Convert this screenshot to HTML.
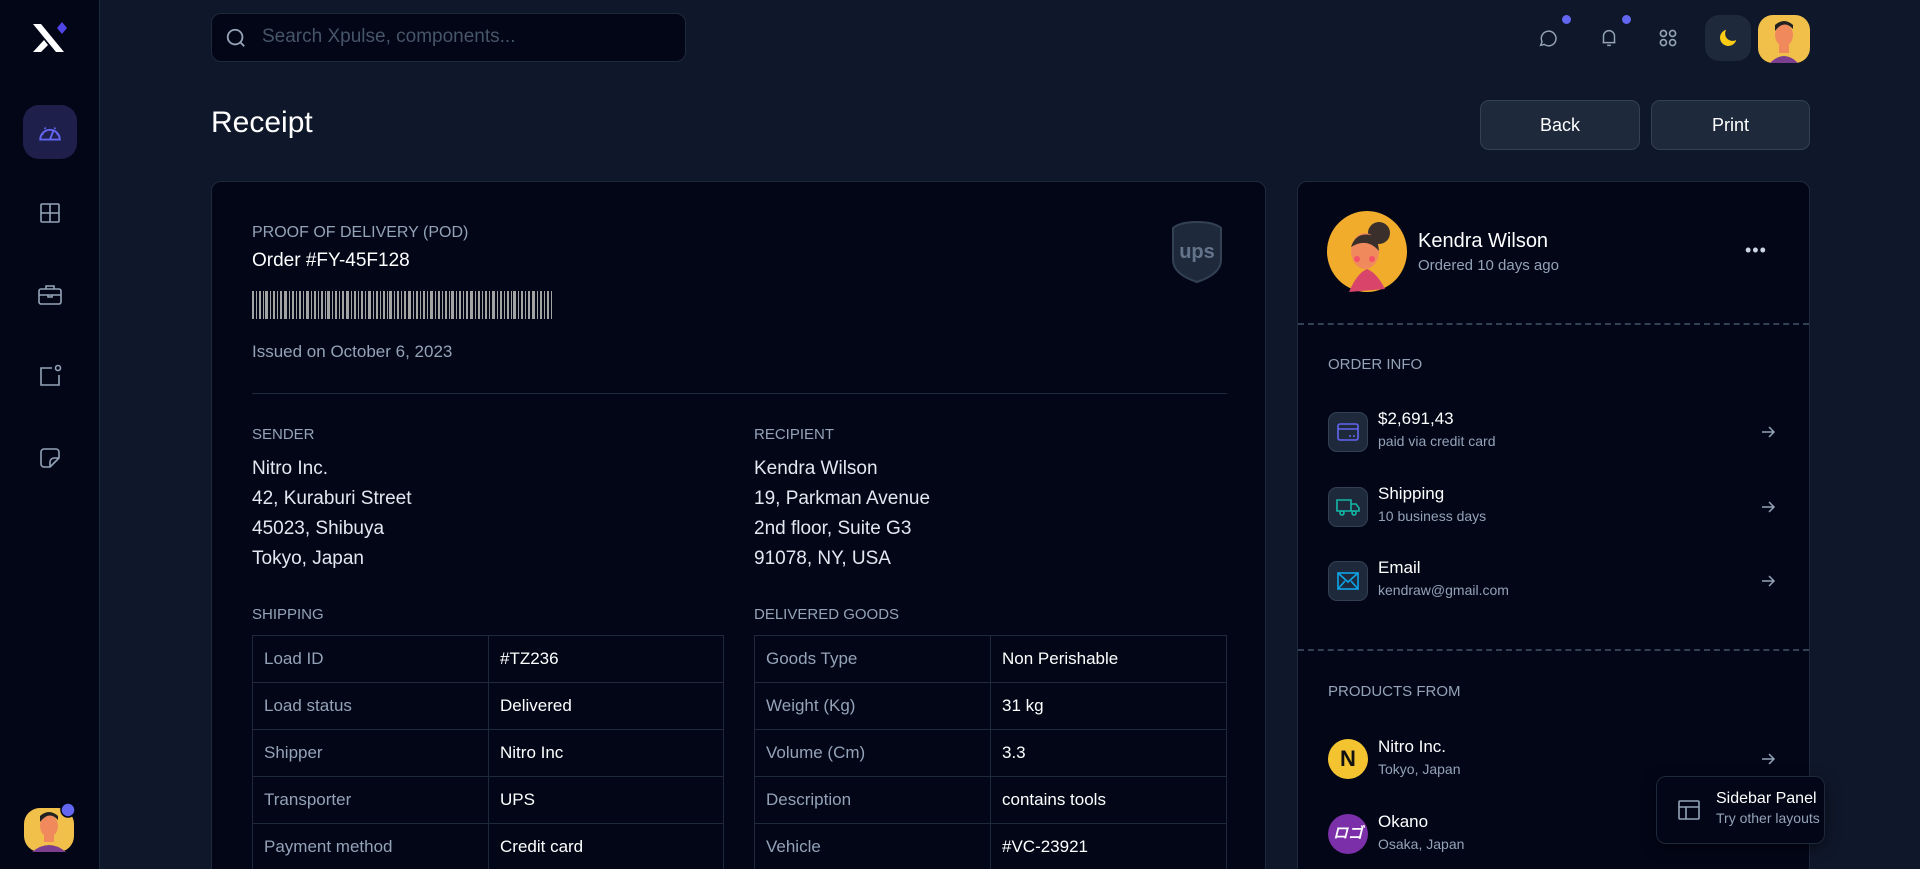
<!DOCTYPE html>
<html><head><meta charset="utf-8"><style>
*{box-sizing:border-box;margin:0;padding:0}
html,body{width:1920px;height:869px;overflow:hidden}
body{background:#0f172a;font-family:"Liberation Sans",sans-serif;color:#f1f5f9}
#w{position:relative;width:1920px;height:869px;overflow:hidden;background:#0f172a}
.abs{position:absolute}
.side{left:0;top:0;width:100px;height:869px;background:#020617;border-right:1px solid #1e293b}
.card{background:#020617;border:1px solid #1e293b;border-radius:10px}
.lbl{color:#94a3b8;font-size:15px;text-transform:uppercase}
.btn{background:#1e293b;border:1px solid #334155;border-radius:9px;font-size:18px;display:flex;align-items:center;justify-content:center;color:#fff}
table{border-collapse:collapse;position:absolute}
td{border:1px solid #1e293b;height:47px;font-size:17px;padding-left:11px}
td.k{color:#94a3b8;width:236px}
td.v{color:#fff}
.addr{font-size:19px;line-height:30px;color:#e2e8f0}
.ib{width:40px;height:40px;border-radius:9px;background:#1e293b;border:1px solid #334155;display:flex;align-items:center;justify-content:center}
.t1{font-size:17px;color:#fff}
.t2{font-size:14px;color:#94a3b8;margin-top:4px}
</style></head><body><div id="w">
<div class="abs side">
 <svg class="abs" style="left:30px;top:20px" width="42" height="38" viewBox="0 0 42 38"><path d="M3 4 L11 4 L34 32 L26 32 Z M3 32 L14 20 L18 25 L11 32 Z" fill="#fff"/><path d="M32 2 L37 8 L32 14 L27 8Z" fill="#4f46e5"/></svg>
 <div class="abs" style="left:23px;top:105px;width:54px;height:54px;border-radius:16px;background:#1e1f4a"></div>
 <svg class="abs" style="left:37px;top:119px" width="26" height="26" viewBox="0 0 24 24" fill="none" stroke="#6366f1" stroke-width="1.8"><path d="M3 19 A9 9 0 1 1 21 19 Z M12 19 L15 11 M4 14h2M18 14h2M7 8l1 1M17 8l-1 1"/></svg>
 <svg class="abs" style="left:38px;top:201px" width="24" height="24" viewBox="0 0 24 24" fill="none" stroke="#94a3b8" stroke-width="1.6"><rect x="3" y="3" width="18" height="18" rx="1"/><path d="M12 3v18M3 12h18"/></svg>
 <svg class="abs" style="left:37px;top:283px" width="26" height="24" viewBox="0 0 26 24" fill="none" stroke="#94a3b8" stroke-width="1.6"><rect x="2" y="6" width="22" height="15" rx="2"/><path d="M9 6V3h8v3M2 12h22M11 12v2h4v-2"/></svg>
 <svg class="abs" style="left:38px;top:364px" width="24" height="24" viewBox="0 0 24 24" fill="none" stroke="#94a3b8" stroke-width="1.6"><path d="M14 4H3v17h18V11"/><circle cx="20" cy="4" r="2.5"/></svg>
 <svg class="abs" style="left:38px;top:446px" width="24" height="24" viewBox="0 0 24 24" fill="none" stroke="#94a3b8" stroke-width="1.6"><path d="M21 12V6a3 3 0 0 0-3-3H6a3 3 0 0 0-3 3v12a3 3 0 0 0 3 3h6Z M21 12l-9 9 M12 21v-5a4 4 0 0 1 4-4h5"/></svg>
 <svg class="abs" style="left:24px;top:802px" width="52" height="52" viewBox="0 0 52 52"><rect width="50" height="44" y="6" rx="16" fill="#f0c04a"/><path d="M8 50 Q25 36 42 50Z" fill="#7c3f8f"/><rect x="20" y="28" width="10" height="12" fill="#f08a5d"/><ellipse cx="25" cy="24" rx="9" ry="11" fill="#f08a5d"/><path d="M16 20 Q25 8 34 18 L34 14 Q25 6 16 14Z" fill="#222"/><circle cx="44" cy="8" r="7" fill="#6366f1" stroke="#020617" stroke-width="1.5"/></svg>
</div>

<div class="abs" style="left:211px;top:13px;width:475px;height:49px;background:#020617;border:1px solid #1e293b;border-radius:10px"></div>
<svg class="abs" style="left:225px;top:27px" width="22" height="22" viewBox="0 0 24 24" fill="none" stroke="#94a3b8" stroke-width="2"><circle cx="11" cy="11" r="8"/><path d="M17 17l4 4"/></svg>
<div class="abs" style="left:262px;top:26px;font-size:19px;color:#475569">Search Xpulse, components...</div>

<svg class="abs" style="left:1537px;top:27px" width="22" height="22" viewBox="0 0 24 24" fill="none" stroke="#94a3b8" stroke-width="1.6"><path d="M4 20l1.5-4A8 8 0 1 1 8 19Z"/></svg>
<div class="abs" style="left:1562px;top:15px;width:9px;height:9px;border-radius:50%;background:#6366f1"></div>
<svg class="abs" style="left:1598px;top:27px" width="22" height="22" viewBox="0 0 24 24" fill="none" stroke="#94a3b8" stroke-width="1.6"><path d="M6 17V10a6 6 0 0 1 12 0v7H5h14M10 20h4"/></svg>
<div class="abs" style="left:1622px;top:15px;width:9px;height:9px;border-radius:50%;background:#6366f1"></div>
<svg class="abs" style="left:1657px;top:27px" width="22" height="22" viewBox="0 0 24 24" fill="none" stroke="#94a3b8" stroke-width="1.8"><circle cx="7" cy="7" r="3.3"/><circle cx="17" cy="7" r="3.3"/><circle cx="7" cy="17" r="3.3"/><circle cx="17" cy="17" r="3.3"/></svg>
<div class="abs" style="left:1705px;top:15px;width:46px;height:46px;border-radius:14px;background:#1e293b"></div>
<svg class="abs" style="left:1717px;top:27px" width="22" height="22" viewBox="0 0 24 24"><path d="M10 3a9 9 0 1 0 11 11A8 8 0 0 1 10 3Z" fill="#facc15"/></svg>
<svg class="abs" style="left:1758px;top:15px" width="52" height="48" viewBox="0 0 52 48"><rect width="52" height="48" rx="15" fill="#f0c04a"/><path d="M12 48 Q26 34 40 48Z" fill="#7c3f8f"/><rect x="21" y="26" width="10" height="12" fill="#f08a5d"/><ellipse cx="26" cy="20" rx="9" ry="11" fill="#f08a5d"/><path d="M17 16 Q26 4 35 14 L35 10 Q26 2 17 10Z" fill="#222"/></svg>

<div class="abs" style="left:211px;top:106px;font-size:30px;color:#fff">Receipt</div>
<div class="abs btn" style="left:1480px;top:100px;width:160px;height:50px">Back</div>
<div class="abs btn" style="left:1651px;top:100px;width:159px;height:50px">Print</div>

<div class="abs card" style="left:211px;top:181px;width:1055px;height:720px">
 <div class="abs lbl" style="left:40px;top:42px;font-size:16px">Proof of delivery (POD)</div>
 <div class="abs" style="left:40px;top:68px;font-size:19px;color:#fff">Order #FY-45F128</div>
 <svg class="abs" style="left:40px;top:109px" width="300" height="28" viewBox="0 0 300 28" fill="#a3a3a3">
  <g id="b"><rect x="0" width="2" height="28"/><rect x="4" width="1" height="28"/><rect x="7" width="2" height="28"/><rect x="11" width="1" height="28"/><rect x="13" width="3" height="28"/><rect x="18" width="1" height="28"/><rect x="21" width="2" height="28"/><rect x="25" width="1" height="28"/><rect x="28" width="2" height="28"/><rect x="32" width="3" height="28"/><rect x="37" width="1" height="28"/><rect x="40" width="2" height="28"/><rect x="44" width="1" height="28"/><rect x="47" width="2" height="28"/><rect x="51" width="1" height="28"/><rect x="54" width="3" height="28"/><rect x="59" width="1" height="28"/></g>
  <use href="#b" x="62"/><use href="#b" x="124"/><use href="#b" x="186"/><use href="#b" x="248"/>
 </svg>
 <div class="abs" style="left:40px;top:160px;font-size:17px;color:#94a3b8">Issued on October 6, 2023</div>
 <svg class="abs" style="left:958px;top:38px" width="54" height="64" viewBox="0 0 54 64"><path d="M27 2 Q10 2 3 8 V40 Q3 54 27 62 Q51 54 51 40 V8 Q44 2 27 2Z" fill="#1e293b" stroke="#334155" stroke-width="2"/><text x="27" y="38" font-family="Liberation Sans" font-weight="bold" font-size="20" fill="#64748b" text-anchor="middle">ups</text></svg>
 <div class="abs" style="left:40px;top:211px;width:975px;height:1px;background:#1e293b"></div>
 <div class="abs lbl" style="left:40px;top:244px">Sender</div>
 <div class="abs lbl" style="left:542px;top:244px">Recipient</div>
 <div class="abs addr" style="left:40px;top:272px">Nitro Inc.<br>42, Kuraburi Street<br>45023, Shibuya<br>Tokyo, Japan</div>
 <div class="abs addr" style="left:542px;top:272px">Kendra Wilson<br>19, Parkman Avenue<br>2nd floor, Suite G3<br>91078, NY, USA</div>
 <div class="abs lbl" style="left:40px;top:424px">Shipping</div>
 <div class="abs lbl" style="left:542px;top:424px">Delivered goods</div>
 <table style="left:40px;top:453px;width:472px">
  <tr><td class="k">Load ID</td><td class="v">#TZ236</td></tr>
  <tr><td class="k">Load status</td><td class="v">Delivered</td></tr>
  <tr><td class="k">Shipper</td><td class="v">Nitro Inc</td></tr>
  <tr><td class="k">Transporter</td><td class="v">UPS</td></tr>
  <tr><td class="k">Payment method</td><td class="v">Credit card</td></tr>
 </table>
 <table style="left:542px;top:453px;width:473px">
  <tr><td class="k">Goods Type</td><td class="v">Non Perishable</td></tr>
  <tr><td class="k">Weight (Kg)</td><td class="v">31 kg</td></tr>
  <tr><td class="k">Volume (Cm)</td><td class="v">3.3</td></tr>
  <tr><td class="k">Description</td><td class="v">contains tools</td></tr>
  <tr><td class="k">Vehicle</td><td class="v">#VC-23921</td></tr>
 </table>
</div>

<div class="abs card" style="left:1297px;top:181px;width:513px;height:720px">
 <svg class="abs" style="left:29px;top:29px" width="80" height="81" viewBox="0 0 80 81"><ellipse cx="40" cy="40.5" rx="40" ry="40.5" fill="#f0ac2a"/><circle cx="52" cy="22" r="11" fill="#3a2f2a"/><path d="M22 81 Q30 62 40 58 Q50 62 58 78Z" fill="#d9456a"/><ellipse cx="38" cy="40" rx="14" ry="18" fill="#f08a5d"/><path d="M24 36 Q30 18 50 26 L52 40 Q40 26 24 36Z" fill="#3a2f2a"/><circle cx="30" cy="48" r="3" fill="#f5526a"/><circle cx="45" cy="48" r="3" fill="#f5526a"/></svg>
 <div class="abs" style="left:120px;top:48px;font-size:20px;color:#fff">Kendra Wilson</div>
 <div class="abs" style="left:120px;top:75px;font-size:15px;color:#94a3b8">Ordered 10 days ago</div>
 <div class="abs" style="left:447px;top:58px;font-size:18px;color:#cbd5e1;letter-spacing:1px">•••</div>
 <div class="abs" style="left:0;top:141px;width:511px;border-top:2px dashed #334155"></div>
 <div class="abs lbl" style="left:30px;top:174px">Order info</div>
 <div class="abs ib" style="left:30px;top:230px"><svg width="22" height="18" viewBox="0 0 22 18" fill="none" stroke="#6366f1" stroke-width="1.6"><rect x="1" y="1" width="20" height="16" rx="2"/><path d="M1 6h20M12 13h2M16 13h2"/></svg></div>
 <div class="abs" style="left:80px;top:227px"><div class="t1">$2,691,43</div><div class="t2">paid via credit card</div></div>
 <div class="abs ib" style="left:30px;top:305px"><svg width="24" height="18" viewBox="0 0 24 18" fill="none" stroke="#14b8a6" stroke-width="1.6"><path d="M1 2h14v11H1ZM15 6h5l3 4v3h-8"/><circle cx="6" cy="15" r="2"/><circle cx="18" cy="15" r="2"/></svg></div>
 <div class="abs" style="left:80px;top:302px"><div class="t1">Shipping</div><div class="t2">10 business days</div></div>
 <div class="abs ib" style="left:30px;top:379px"><svg width="22" height="18" viewBox="0 0 22 18" fill="none" stroke="#0ea5e9" stroke-width="1.6"><rect x="1" y="1" width="20" height="16"/><path d="M1 1l10 9 10-9M1 17l7-8M21 17l-7-8"/></svg></div>
 <div class="abs" style="left:80px;top:376px"><div class="t1">Email</div><div class="t2">kendraw@gmail.com</div></div>
 <svg class="abs" style="left:462px;top:242px" width="16" height="16" viewBox="0 0 16 16" fill="none" stroke="#94a3b8" stroke-width="1.5"><path d="M2 8h12M9 3l5 5-5 5"/></svg>
 <svg class="abs" style="left:462px;top:317px" width="16" height="16" viewBox="0 0 16 16" fill="none" stroke="#94a3b8" stroke-width="1.5"><path d="M2 8h12M9 3l5 5-5 5"/></svg>
 <svg class="abs" style="left:462px;top:391px" width="16" height="16" viewBox="0 0 16 16" fill="none" stroke="#94a3b8" stroke-width="1.5"><path d="M2 8h12M9 3l5 5-5 5"/></svg>
 <div class="abs" style="left:0;top:467px;width:511px;border-top:2px dashed #334155"></div>
 <div class="abs lbl" style="left:30px;top:501px">Products from</div>
 <div class="abs" style="left:30px;top:557px;width:40px;height:40px;border-radius:50%;background:#f4c430;color:#111;font-weight:bold;font-size:22px;text-align:center;line-height:40px">N</div>
 <div class="abs" style="left:80px;top:555px"><div class="t1">Nitro Inc.</div><div class="t2">Tokyo, Japan</div></div>
 <svg class="abs" style="left:462px;top:569px" width="16" height="16" viewBox="0 0 16 16" fill="none" stroke="#94a3b8" stroke-width="1.5"><path d="M2 8h12M9 3l5 5-5 5"/></svg>
 <div class="abs" style="left:30px;top:632px;width:40px;height:40px;border-radius:50%;background:#7b2fa8;color:#fff;font-weight:bold;font-style:italic;font-size:15px;text-align:center;line-height:40px">ロゴ</div>
 <div class="abs" style="left:80px;top:630px"><div class="t1">Okano</div><div class="t2">Osaka, Japan</div></div>
</div>

<div class="abs" style="left:1656px;top:776px;width:169px;height:68px;background:#020617;border:1px solid #1e293b;border-radius:10px;box-shadow:0 4px 14px rgba(0,0,0,.5)"></div>
<svg class="abs" style="left:1677px;top:798px" width="24" height="24" viewBox="0 0 24 24" fill="none" stroke="#94a3b8" stroke-width="1.6"><rect x="2" y="3" width="20" height="18" rx="1"/><path d="M2 9h20M9 9v12"/></svg>
<div class="abs" style="left:1716px;top:790px;font-size:16px;color:#fff">Sidebar Panel</div>
<div class="abs" style="left:1716px;top:810px;font-size:14px;color:#94a3b8">Try other layouts</div>
</div></body></html>
